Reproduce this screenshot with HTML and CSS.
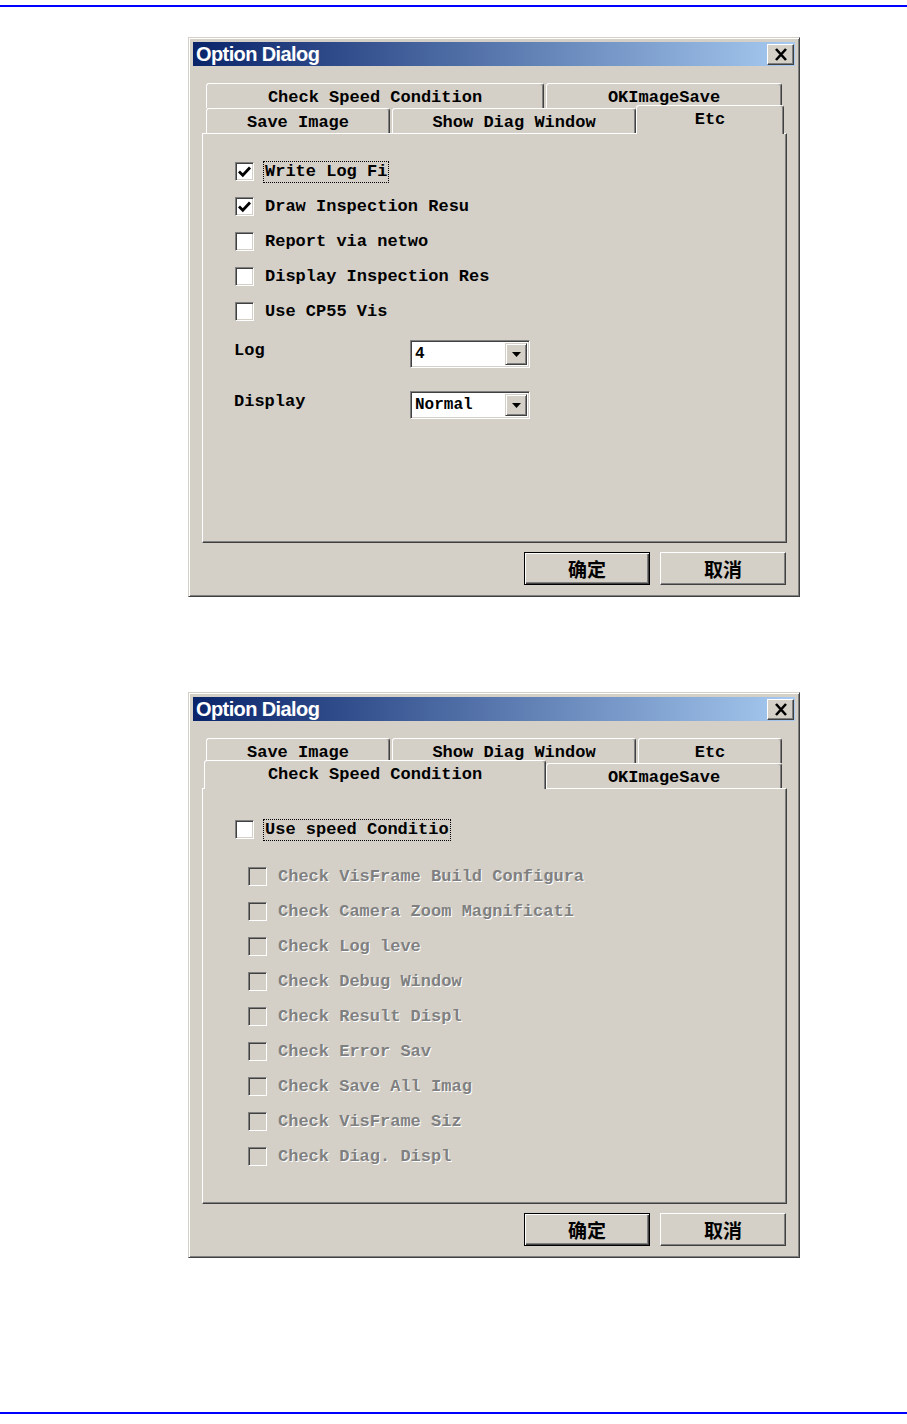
FILE: index.html
```html
<!doctype html>
<html>
  <head>
    <meta charset="utf-8" />
    <title>Option Dialog</title>
    <link rel="stylesheet" href="styles.css">
  </head>
  <body>
    <div class="rule rule-top"></div>

    <!-- Etc page -->
    <div class="dialog dialog-first">
      <div class="titlebar">
        <span class="title">Option Dialog</span>
        <span class="close-btn">
          <svg width="14" height="13" viewBox="0 0 14 13"><path d="M2 1 L12 12 M12 1 L2 12" stroke="#000" stroke-width="2.6" fill="none"/></svg>
        </span>
      </div>
      <div class="tabs">
        <div class="tab-row">
          <div class="tab tab-speed">Check Speed Condition</div>
          <div class="tab tab-ok">OKImageSave</div>
        </div>
        <div class="tab-row">
          <div class="tab tab-save">Save Image</div>
          <div class="tab tab-diag">Show Diag Window</div>
          <div class="tab tab-etc active">Etc</div>
        </div>
      </div>
      <div class="panel panel-etc">
        <div class="check-row">
          <span class="box"><svg width="15" height="15" viewBox="0 0 15 15"><path d="M2 7.5 L5.8 11.2 L13 3.5" stroke="#000" stroke-width="2.8" fill="none"/></svg></span>
          <span class="label focus">Write Log Fi</span>
        </div>
        <div class="check-row">
          <span class="box"><svg width="15" height="15" viewBox="0 0 15 15"><path d="M2 7.5 L5.8 11.2 L13 3.5" stroke="#000" stroke-width="2.8" fill="none"/></svg></span>
          <span class="label">Draw Inspection Resu</span>
        </div>
        <div class="check-row">
          <span class="box"></span>
          <span class="label">Report via netwo</span>
        </div>
        <div class="check-row">
          <span class="box"></span>
          <span class="label">Display Inspection Res</span>
        </div>
        <div class="check-row">
          <span class="box"></span>
          <span class="label">Use CP55 Vis</span>
        </div>

        <div class="field">
          <span class="field-label">Log</span>
          <div class="combo">
            <span class="combo-value">4</span>
            <span class="combo-btn"><svg width="9" height="5" viewBox="0 0 9 5"><path d="M0 0 H9 L4.5 5 Z" fill="#000"/></svg></span>
          </div>
        </div>
        <div class="field">
          <span class="field-label">Display</span>
          <div class="combo">
            <span class="combo-value">Normal</span>
            <span class="combo-btn"><svg width="9" height="5" viewBox="0 0 9 5"><path d="M0 0 H9 L4.5 5 Z" fill="#000"/></svg></span>
          </div>
        </div>
      </div>
      <div class="buttons">
        <button class="btn default">确定</button>
        <button class="btn">取消</button>
      </div>
    </div>

    <!-- Check Speed Condition page -->
    <div class="dialog dialog-second">
      <div class="titlebar">
        <span class="title">Option Dialog</span>
        <span class="close-btn">
          <svg width="14" height="13" viewBox="0 0 14 13"><path d="M2 1 L12 12 M12 1 L2 12" stroke="#000" stroke-width="2.6" fill="none"/></svg>
        </span>
      </div>
      <div class="tabs">
        <div class="tab-row">
          <div class="tab tab-save">Save Image</div>
          <div class="tab tab-diag">Show Diag Window</div>
          <div class="tab tab-etc">Etc</div>
        </div>
        <div class="tab-row">
          <div class="tab tab-speed active">Check Speed Condition</div>
          <div class="tab tab-ok">OKImageSave</div>
        </div>
      </div>
      <div class="panel panel-speed">
        <div class="check-row">
          <span class="box"></span>
          <span class="label focus">Use speed Conditio</span>
        </div>
        <div class="sub-checks">
          <div class="check-row disabled"><span class="box"></span><span class="label">Check VisFrame Build Configura</span></div>
          <div class="check-row disabled"><span class="box"></span><span class="label">Check Camera Zoom Magnificati</span></div>
          <div class="check-row disabled"><span class="box"></span><span class="label">Check Log leve</span></div>
          <div class="check-row disabled"><span class="box"></span><span class="label">Check Debug Window</span></div>
          <div class="check-row disabled"><span class="box"></span><span class="label">Check Result Displ</span></div>
          <div class="check-row disabled"><span class="box"></span><span class="label">Check Error Sav</span></div>
          <div class="check-row disabled"><span class="box"></span><span class="label">Check Save All Imag</span></div>
          <div class="check-row disabled"><span class="box"></span><span class="label">Check VisFrame Siz</span></div>
          <div class="check-row disabled"><span class="box"></span><span class="label">Check Diag. Displ</span></div>
        </div>
      </div>
      <div class="buttons">
        <button class="btn default">确定</button>
        <button class="btn">取消</button>
      </div>
    </div>

    <div class="rule rule-bottom"></div>
  </body>
</html>
```

FILE: styles.css
```css
body {
  margin: 0;
  background: #fff;
  font-family: "Liberation Mono", "DejaVu Sans Mono", monospace;
  font-size: 17px;
  font-weight: bold;
  color: #000;
}

.rule {
  height: 2px;
  background: #0000ff;
}

.rule-top {
  margin-top: 5px;
}

.rule-bottom {
  margin-top: 154px;
}

.dialog {
  box-sizing: border-box;
  width: 612px;
  margin-left: 188px;
  padding: 4px 4px 0;
  background: #d4d0c8;
  border: 1px solid;
  border-color: #d4d0c8 #404040 #404040 #d4d0c8;
  box-shadow: inset 1px 1px #fff, inset -1px -1px #808080;
}

.dialog-first {
  margin-top: 30px;
}

.dialog-second {
  margin-top: 95px;
}

.titlebar {
  display: flex;
  align-items: center;
  justify-content: space-between;
  height: 24px;
  padding: 0 1px 0 3px;
  background: linear-gradient(to right, #0a246a, #a6caf0);
}

.title {
  color: #fff;
  font-family: "Liberation Sans", Arial, sans-serif;
  font-size: 20px;
  font-weight: bold;
  letter-spacing: -0.6px;
}

.close-btn {
  box-sizing: border-box;
  display: flex;
  align-items: center;
  justify-content: center;
  width: 27px;
  height: 21px;
  background: #d4d0c8;
  border: 1px solid;
  border-color: #fff #404040 #404040 #fff;
  box-shadow: inset -1px -1px #808080;
}

.tabs {
  margin: 17px 8px 0 9px;
  padding-left: 4px;
}

.tab-row {
  display: flex;
  gap: 2px;
  height: 25px;
  align-items: flex-start;
}

.tab {
  box-sizing: border-box;
  width: var(--w);
  height: 25px;
  padding-top: 3px;
  line-height: 21px;
  text-align: center;
  white-space: nowrap;
  background: #d4d0c8;
  border: 1px solid;
  border-bottom: none;
  border-color: #fff #404040 transparent #fff;
  border-radius: 3px 3px 0 0;
  box-shadow: inset -1px 0 #808080;
}

.tab-speed { --w: 338px; }
.tab-ok { --w: 236px; }
.tab-save { --w: 184px; }
.tab-diag { --w: 244px; }
.tab-etc { --w: 144px; }

.tab.active {
  position: relative;
  z-index: 1;
  width: calc(var(--w) + 4px);
  height: 29px;
  margin: -3px -2px -1px;
}

.panel {
  box-sizing: border-box;
  margin: 0 8px 0 9px;
  padding-left: 32px;
  border: 1px solid;
  border-color: #fff #404040 #404040 #fff;
  box-shadow: inset -1px -1px #808080;
}

.panel-etc {
  height: 410px;
  padding-top: 20px;
}

.panel-speed {
  height: 416px;
  padding-top: 23px;
}

.check-row {
  display: flex;
  align-items: center;
  gap: 9px;
  height: 35px;
}

.box {
  box-sizing: border-box;
  display: flex;
  align-items: center;
  justify-content: center;
  width: 19px;
  height: 19px;
  background: #fff;
  border: 1px solid;
  border-color: #808080 #fff #fff #808080;
  box-shadow: inset 1px 1px #404040, inset -1px -1px #d4d0c8;
}

.label {
  padding: 0 1px;
  line-height: 20px;
  white-space: nowrap;
  border: 1px solid transparent;
}

.label.focus {
  border: 1px dotted #000;
}

.sub-checks {
  margin: 12px 0 0 13px;
}

.check-row.disabled .box {
  background: #d4d0c8;
}

.check-row.disabled .label {
  color: #808080;
  text-shadow: 1px 1px #fff;
}

.field {
  display: flex;
  align-items: flex-start;
  margin-top: 11px;
}

.field + .field {
  margin-top: 23px;
}

.field-label {
  width: 176px;
  margin-left: -1px;
  line-height: 20px;
  padding-top: 1px;
}

.combo {
  box-sizing: border-box;
  display: flex;
  align-items: center;
  justify-content: space-between;
  width: 120px;
  height: 28px;
  padding: 2px;
  background: #fff;
  border: 1px solid;
  border-color: #808080 #fff #fff #808080;
  box-shadow: inset 1px 1px #404040, inset -1px -1px #d4d0c8;
}

.combo-value {
  padding-left: 2px;
  font-size: 16px;
}

.combo-btn {
  box-sizing: border-box;
  display: flex;
  align-items: center;
  justify-content: center;
  width: 22px;
  height: 22px;
  background: #d4d0c8;
  border: 1px solid;
  border-color: #d4d0c8 #404040 #404040 #d4d0c8;
  box-shadow: inset 1px 1px #fff, inset -1px -1px #808080;
}

.buttons {
  display: flex;
  justify-content: flex-end;
  gap: 10px;
  margin: 9px 9px 11px 0;
}

.btn {
  box-sizing: border-box;
  width: 126px;
  height: 33px;
  padding: 0;
  background: #d4d0c8;
  font-family: "Noto Sans CJK SC", sans-serif;
  font-size: 19px;
  font-weight: bold;
  color: #000;
  border: 1px solid;
  border-color: #fff #404040 #404040 #fff;
  box-shadow: inset -1px -1px #808080;
}

.btn.default {
  border-color: #000;
  box-shadow: inset 1px 1px #fff, inset -1px -1px #404040, inset -2px -2px #808080;
}
```
